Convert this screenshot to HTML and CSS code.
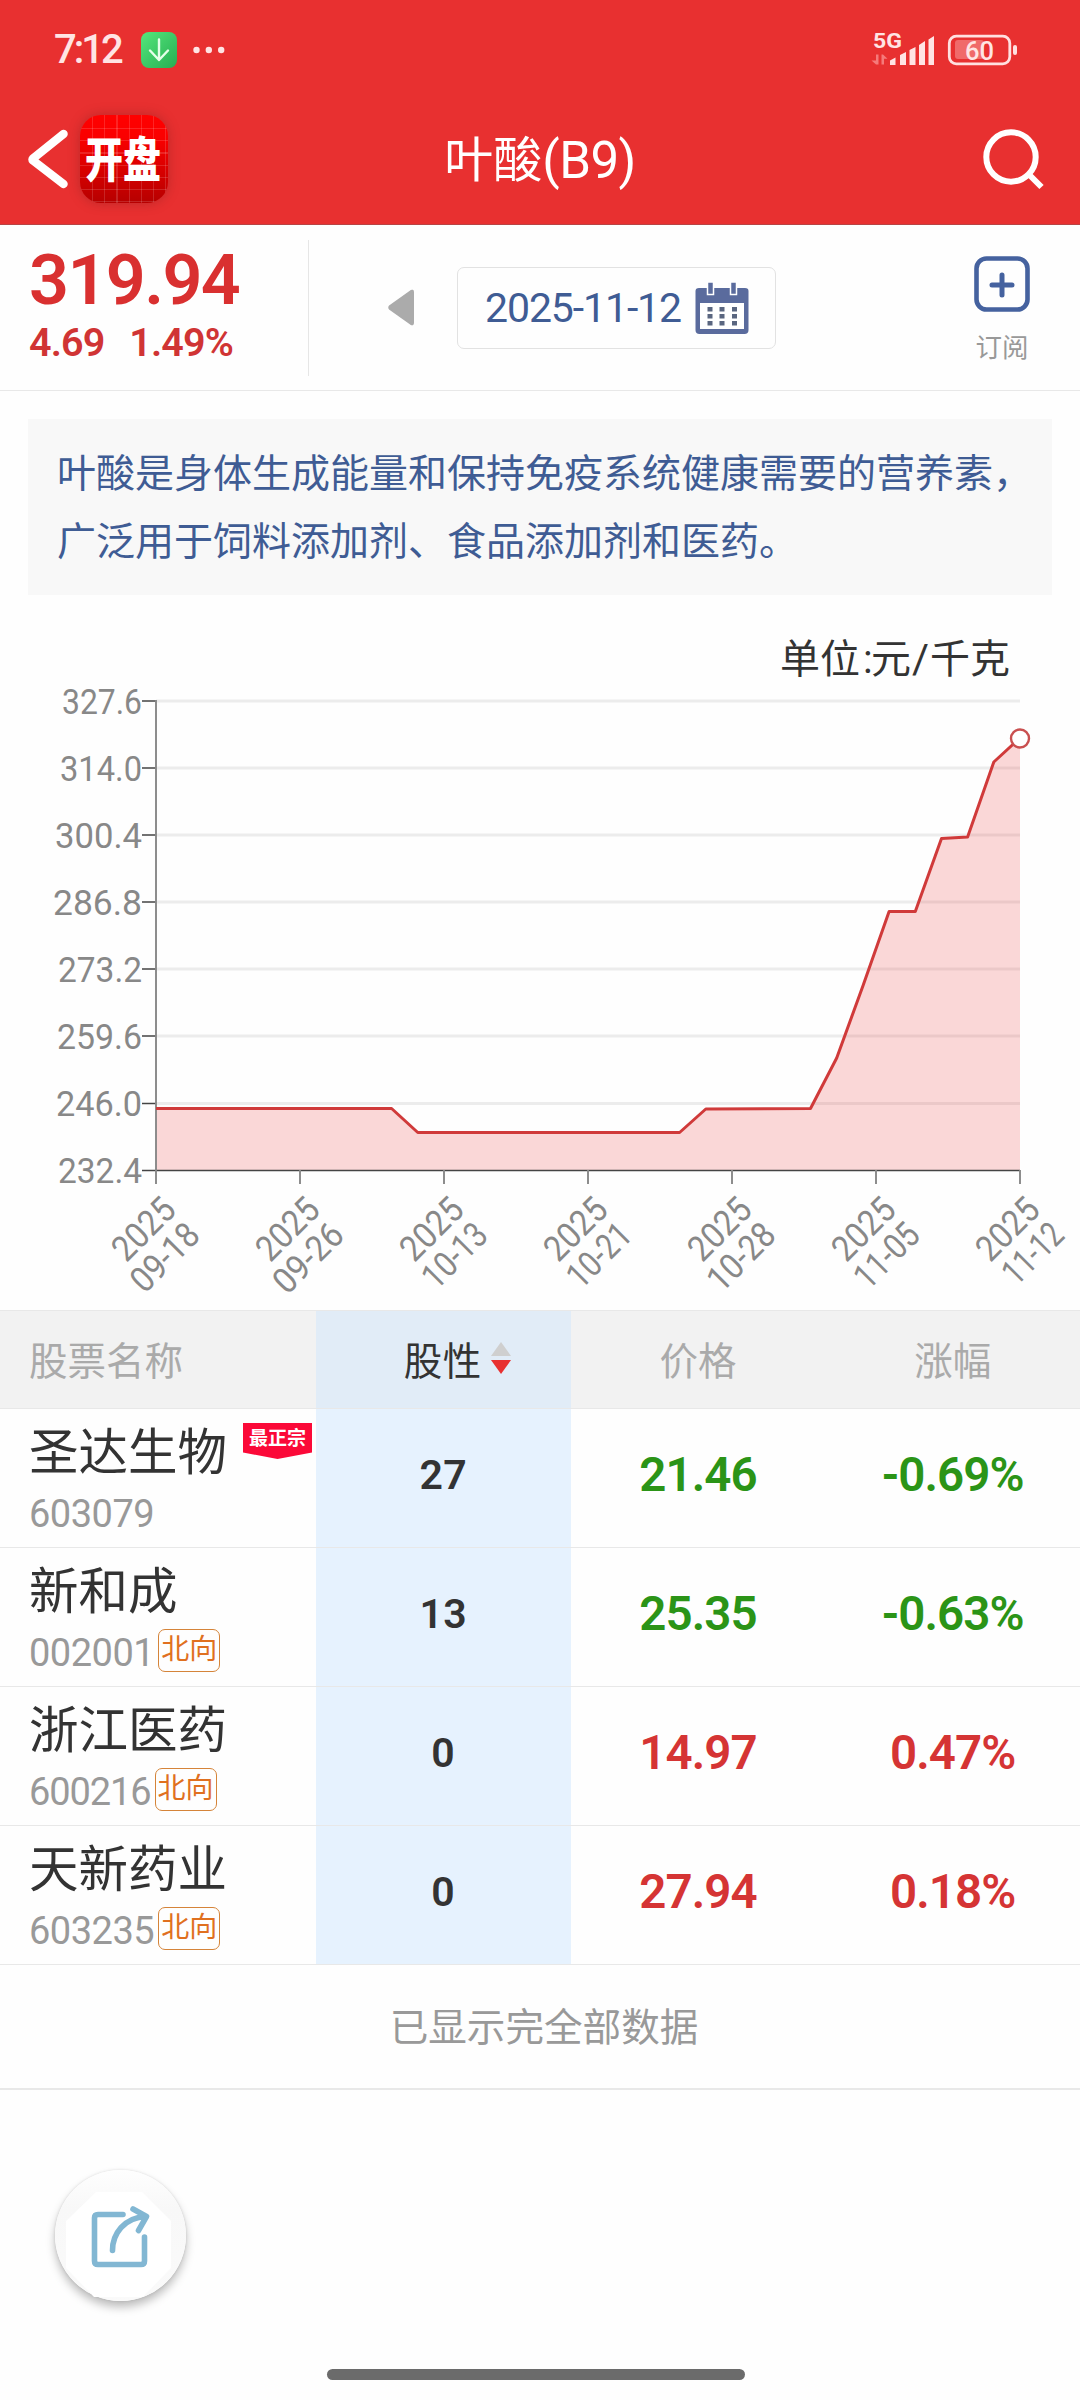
FILE: index.html
```html
<!DOCTYPE html>
<html lang="zh-CN">
<head>
<meta charset="utf-8">
<title>叶酸(B9)</title>
<link rel="stylesheet" href="styles.css">
</head>
<body>
<div class="screen">
  <header class="top">
    <div class="status">
      <span class="time">7:12</span>
      <svg class="dl" width="36" height="36" viewBox="0 0 36 36"><defs><linearGradient id="g" x1="0" y1="0" x2="1" y2="1"><stop offset="0" stop-color="#54e67c"/><stop offset="1" stop-color="#27ae52"/></linearGradient></defs><rect width="36" height="36" rx="8" fill="url(#g)"/><path d="M18 7.500V28M9 18.500L18 28L27 18.500" fill="none" stroke="#e4ffe9" stroke-width="2.400" stroke-linecap="round" stroke-linejoin="round"/></svg>
      <svg class="more" width="32" height="8" viewBox="0 0 32 8" fill="#ffe4e4"><circle cx="3.500" cy="4" r="3.200"/><circle cx="15.800" cy="4" r="3.200"/><circle cx="28.200" cy="4" r="3.200"/></svg>
      <svg class="net" width="150" height="40" viewBox="870 30 150 40">
        <text x="874" y="48" class="g5" textLength="29" lengthAdjust="spacingAndGlyphs">5G</text>
        <path d="M879.500 54.500V64.500H877L872.500 60.500H877V54.500ZM882.500 64.500V54.500H884L888.500 58.800H885V64.500Z" fill="#f57a7a"/>
        <path d="M891 65V60.500L896.500 57.500V65ZM901 65V55L907 52V65ZM910.500 65V50L916.500 47V65ZM920 65V45L926 41V65ZM929.500 65V39.500L935 36V65Z" fill="#ffe4e4"/>
        <rect x="956" y="40" width="29" height="19" rx="3" fill="#f06a6a"/>
        <rect x="950.300" y="36.200" width="60.500" height="27.600" rx="7" fill="none" stroke="#ffe0e0" stroke-width="2.800"/>
        <rect x="1014" y="45" width="4" height="10" rx="2" fill="#ffe0e0"/>
        <text x="966" y="59.500" class="bat" textLength="29" lengthAdjust="spacingAndGlyphs">60</text>
      </svg>
    </div>
    <nav class="nav">
      <div class="nav-left">
        <svg width="42" height="64" viewBox="0 0 42 64"><path d="M36.500 7L6 31.500Q5 32.500 6 33.500L36.500 57" fill="none" stroke="#fff" stroke-width="8.500" stroke-linecap="round" stroke-linejoin="round"/></svg>
        <span class="logo"><b>开盘</b></span>
      </div>
      <h1><span>叶酸</span><span class="b9">(B9)</span></h1>
      <svg class="search" width="62" height="64" viewBox="0 0 62 64" fill="none" stroke="#fff" stroke-width="6"><circle cx="29" cy="30" r="24.700"/><path d="M47 47.500L59.500 60"/></svg>
    </nav>
  </header>

  <section class="summary">
    <div class="quote">
      <div class="big">319.94</div>
      <div class="sub"><span>4.69</span><span>1.49%</span></div>
    </div>
    <svg class="prev" width="29" height="39" viewBox="0 0 29 39"><path d="M3 18L24 3Q26 2 26 4V35Q26 37 24 36L3 21Q1.500 19.500 3 18Z" fill="#ababab" stroke="#ababab" stroke-width="2"/></svg>
    <div class="date"><span>2025-11-12</span>
      <svg width="54" height="52" viewBox="0 0 54 52"><path d="M4 6H50Q53.500 6 53.500 9V48Q53.500 52 49.500 52H4.500Q.500 52 .500 48V9Q.500 6 4 6Z" fill="#5a6b9d"/><path d="M5 21H49V47H5Z" fill="#fff"/><path d="M12.500 0H18.500V12.500H12.500ZM35.500 0H41.500V12.500H35.500Z" fill="#5a6b9d" stroke="#fff" stroke-width="1.500"/><path d="M12.500 25H17.500V29.500H12.500ZM24.500 25H29.500V29.500H24.500ZM37 25H42V29.500H37ZM12.500 32H17.500V36.500H12.500ZM24.500 32H29.500V36.500H24.500ZM37 32H42V36.500H37ZM12.500 39H17.500V43.500H12.500ZM24.500 39H29.500V43.500H24.500ZM37 39H42V43.500H37Z" fill="#5a6680"/></svg>
    </div>
    <div class="follow">
      <svg width="56" height="56" viewBox="0 0 56 56" fill="none" stroke="#45629f" stroke-linecap="round"><rect x="2.500" y="2.500" width="51" height="51" rx="10" stroke-width="4.600"/><path d="M18 29H38M28 19V39" stroke-width="5"/></svg>
      <span>订阅</span>
    </div>
  </section>

  <p class="intro">叶酸是身体生成能量和保持免疫系统健康需要的营养素，<br>广泛用于饲料添加剂、食品添加剂和医药。</p>

  <svg class="chart" width="1080" height="715" viewBox="0 595 1080 715">
    <g class="unit"><text x="780" y="673" textLength="80" lengthAdjust="spacingAndGlyphs">单位</text><text x="863" y="673">:</text><text x="871" y="673">元</text><text x="912" y="673" textLength="17" lengthAdjust="spacingAndGlyphs">/</text><text x="930" y="673" textLength="80" lengthAdjust="spacingAndGlyphs">千克</text></g>
    <path d="M156 701H1020M156 768H1020M156 835H1020M156 902H1020M156 969H1020M156 1036H1020M156 1103.500H1020" stroke="#ececec" stroke-width="3"/>
    <path d="M156 1108.500H391.600L417.800 1132.500H679.600L705.800 1109L810.500 1108.500L836.700 1058L862.900 986L889.100 911.500H915.300L941.500 838.500L967.600 837L993.800 762L1020 738V1170.500H156Z" fill="#e83030" fill-opacity=".19"/>
    <path d="M142 701H156M142 768H156M142 835H156M142 902H156M142 969H156M142 1036H156M142 1103.500H156M142 1170.500H1020" stroke="#444" stroke-width="1.300"/>
    <path d="M156 700V1184M300 1170V1184M444 1170V1184M588 1170V1184M732 1170V1184M876 1170V1184M1020 1170V1184" stroke="#888" stroke-width="1.900"/>
    <path d="M156 1108.500H391.600L417.800 1132.500H679.600L705.800 1109L810.500 1108.500L836.700 1058L862.900 986L889.100 911.500H915.300L941.500 838.500L967.600 837L993.800 762L1020 738" fill="none" stroke="#d03a3a" stroke-width="3" stroke-linejoin="round"/>
    <circle cx="1020" cy="738.500" r="9" fill="#fff" stroke="#c95050" stroke-width="2.400"/>
    <g class="lab" text-anchor="end">
      <text x="142" y="714" textLength="80" lengthAdjust="spacingAndGlyphs">327.6</text>
      <text x="142" y="781" textLength="82" lengthAdjust="spacingAndGlyphs">314.0</text>
      <text x="142" y="848" textLength="87" lengthAdjust="spacingAndGlyphs">300.4</text>
      <text x="142" y="915" textLength="89" lengthAdjust="spacingAndGlyphs">286.8</text>
      <text x="142" y="982" textLength="84" lengthAdjust="spacingAndGlyphs">273.2</text>
      <text x="142" y="1049" textLength="85" lengthAdjust="spacingAndGlyphs">259.6</text>
      <text x="142" y="1116" textLength="86" lengthAdjust="spacingAndGlyphs">246.0</text>
      <text x="142" y="1183" textLength="84" lengthAdjust="spacingAndGlyphs">232.4</text>
    </g>
    <g class="lab" text-anchor="end">
      <g transform="translate(156 1170) rotate(-45)"><text x="-14" y="45" textLength="73" lengthAdjust="spacingAndGlyphs">2025</text><text x="-15" y="80" textLength="81" lengthAdjust="spacingAndGlyphs">09-18</text></g>
      <g transform="translate(300 1170) rotate(-45)"><text x="-14" y="45" textLength="73" lengthAdjust="spacingAndGlyphs">2025</text><text x="-15" y="80" textLength="83" lengthAdjust="spacingAndGlyphs">09-26</text></g>
      <g transform="translate(444 1170) rotate(-45)"><text x="-14" y="45" textLength="73" lengthAdjust="spacingAndGlyphs">2025</text><text x="-15" y="80" textLength="76" lengthAdjust="spacingAndGlyphs">10-13</text></g>
      <g transform="translate(588 1170) rotate(-45)"><text x="-14" y="45" textLength="73" lengthAdjust="spacingAndGlyphs">2025</text><text x="-15" y="80" textLength="75" lengthAdjust="spacingAndGlyphs">10-21</text></g>
      <g transform="translate(732 1170) rotate(-45)"><text x="-14" y="45" textLength="73" lengthAdjust="spacingAndGlyphs">2025</text><text x="-15" y="80" textLength="80" lengthAdjust="spacingAndGlyphs">10-28</text></g>
      <g transform="translate(876 1170) rotate(-45)"><text x="-14" y="45" textLength="73" lengthAdjust="spacingAndGlyphs">2025</text><text x="-15" y="80" textLength="76" lengthAdjust="spacingAndGlyphs">11-05</text></g>
      <g transform="translate(1020 1170) rotate(-45)"><text x="-14" y="45" textLength="73" lengthAdjust="spacingAndGlyphs">2025</text><text x="-15" y="80" textLength="70" lengthAdjust="spacingAndGlyphs">11-12</text></g>
    </g>
  </svg>

  <section class="table">
    <div class="row head">
      <span class="h-name">股票名称</span>
      <span class="hot">股性<svg width="22" height="32" viewBox="0 0 22 32"><path d="M11 0L21 14H1Z" fill="#cfcfcf"/><path d="M1 18H21L11 32Z" fill="#e83030"/></svg></span>
      <span>价格</span><span>涨幅</span>
    </div>
    <div class="row down">
      <div class="stock"><div class="name">圣达生物</div><div class="code">603079</div><span class="badge">最正宗</span></div>
      <span class="hot">27</span><span class="num">21.46</span><span class="num">-0.69%</span>
    </div>
    <div class="row down">
      <div class="stock"><div class="name">新和成</div><div class="code">002001<i>北向</i></div></div>
      <span class="hot">13</span><span class="num">25.35</span><span class="num">-0.63%</span>
    </div>
    <div class="row up">
      <div class="stock"><div class="name">浙江医药</div><div class="code narrow">600216<i>北向</i></div></div>
      <span class="hot">0</span><span class="num">14.97</span><span class="num">0.47%</span>
    </div>
    <div class="row up">
      <div class="stock"><div class="name">天新药业</div><div class="code">603235<i>北向</i></div></div>
      <span class="hot">0</span><span class="num">27.94</span><span class="num">0.18%</span>
    </div>
  </section>
  <div class="end">已显示完全部数据</div>

  <button class="fab" aria-label="分享">
    <svg width="131" height="131" viewBox="0 0 131 131" fill="none" stroke="#82b7d3" stroke-width="5.600" stroke-linecap="round" stroke-linejoin="round"><path d="M41 22H87L116 51V98L88 127H39L11 98V51Z" fill="#fff" stroke="none"/><path d="M68 44.500H43Q39.500 44.500 39.500 48V91Q39.500 94.500 43 94.500H86Q89.500 94.500 89.500 91V67M57.500 80.500C57.500 64 69 47.500 91 46.500M78 39L91.500 46.500L83.500 60.500"/></svg>
  </button>
  <div class="home"></div>
</div>
</body>
</html>
```
FILE: styles.css
```css
* { box-sizing: border-box; }
body { margin: 0; background: #fff; font-family: Roboto, "Noto Sans CJK SC", sans-serif; }
svg { display: block; flex: none; }
.screen { position: relative; width: 1080px; height: 2400px; overflow: hidden; background: #fefefe; display: flex; flex-direction: column; }

.top { height: 225px; background: #e83030; border-bottom: 1px solid #b84444; flex: none; }
.status { height: 100px; display: flex; align-items: center; padding: 0 61px 0 54px; }
.time { width: 87px; font-size: 40px; line-height: 44px; color: #ffe4e4; font-weight: 500; letter-spacing: -3px; white-space: nowrap; }
.more { margin-left: 16px; }
.net { margin-left: auto; }
.g5 { font: 700 21px Roboto, sans-serif; fill: #ffe4e4; }
.bat { font: 500 26px Roboto, sans-serif; fill: #ffe4e4; }
.nav { height: 118px; display: grid; grid-template-columns: 300px 1fr 300px; align-items: center; padding: 0 36px 0 27px; }
.nav-left { display: flex; align-items: center; gap: 11px; }
.logo { width: 88px; height: 88px; border-radius: 21px; display: flex; align-items: center; justify-content: center; color: #fff; box-shadow: 0 0 12px rgba(120,30,30,.4);
  background: repeating-linear-gradient(90deg, transparent 0 11px, rgba(255,255,255,.14) 11px 12.200px) 1px 0, repeating-linear-gradient(transparent 0 11px, rgba(255,255,255,.14) 11px 12.200px) 0 2px, linear-gradient(#ff0000, #fa0000 25%, #b60000); }
.logo b { font: 900 38px/44px "Noto Sans CJK SC", sans-serif; transform: scaleY(1.25); margin: -4px 2px 0 0; }
.nav h1 { margin: 0; padding: 4px 0 0 9px; display: flex; justify-content: center; align-items: center; font-weight: 400; font-size: 49px; line-height: 60px; color: #fff; white-space: nowrap; }
.b9 { font-size: 51px; letter-spacing: -.5px; }
.search { justify-self: end; }

.summary { height: 166px; border-bottom: 1px solid #e8e8e8; display: flex; align-items: center; flex: none; padding-right: 50px; }
.quote { width: 309px; height: 136px; border-right: 1px solid #e6e6e6; padding: 5px 0 0 29px; color: #d93030; }
.big { font-size: 70px; font-weight: 600; line-height: 70px; letter-spacing: -1.600px; height: 70px; }
.sub { display: flex; gap: 25px; font-size: 39.500px; font-weight: 600; line-height: 56px; letter-spacing: -.900px; color: #d03434; }
.prev { margin-left: 78px; }
.date { margin-left: 41px; width: 319px; height: 82px; border: 1.500px solid #e2e2e2; border-radius: 7px; display: flex; align-items: center; justify-content: space-between; padding: 0 26px 0 27px; font-size: 41px; color: #3f5c94; letter-spacing: -1.100px; white-space: nowrap; margin-top: 1px; }
.follow { margin-left: auto; display: flex; flex-direction: column; align-items: center; gap: 19px; font-size: 26.500px; line-height: 34px; color: #999; margin-top: 6px; }

.intro { margin: 28px 28px 0; height: 176px; background: #f8f8f8; padding: 21px 0 0 29px; font-size: 39px; line-height: 68px; color: #3f5c94; white-space: nowrap; flex: none; }
.chart { font-family: Roboto, "Noto Sans CJK SC", sans-serif; }
.unit { font-size: 40px; fill: #333; }
.lab { font-size: 35.500px; fill: #888; }

.row { display: grid; grid-template-columns: 316px repeat(3, 254.667px); height: 139px; border-bottom: 1px solid #e8e8e8; }
.row > span { display: flex; align-items: center; justify-content: center; }
.row.head { height: 99px; border-top: 1px solid #e8e8e8; background: #f2f2f2; color: #aaa; font-size: 38.500px; }
.row.head > span { padding-bottom: 3px; }
.row.head > .h-name { justify-content: flex-start; padding-left: 29px; }
.row .hot { background: #e6f2fe; color: #333; font-size: 41px; font-weight: 600; letter-spacing: .500px; padding-bottom: 7px; }
.row.head .hot { background: #e1ecf7; font-size: 38.500px; font-weight: 400; gap: 8px; padding-left: 29px; }
.num { font-size: 47.500px; font-weight: 600; letter-spacing: -.900px; padding-bottom: 7px; }
.down { color: #2b9417; }
.up { color: #d53434; }
.stock { position: relative; padding: 11px 0 0 29px; }
.name { font-size: 49.500px; line-height: 66px; height: 68px; color: #333; white-space: nowrap; }
.code { height: 52px; display: flex; align-items: center; gap: 4px; font-size: 38px; line-height: 52px; letter-spacing: -.500px; color: #999; }
.code.narrow { letter-spacing: -1.100px; }
.code i { width: 62px; height: 43px; margin-top: -5px; border: 1.500px solid #d58439; border-radius: 7px; font-style: normal; font-size: 28px; line-height: 40px; text-align: center; color: #e0701f; letter-spacing: 0; }
.badge { position: absolute; left: 243px; top: 14px; width: 69px; height: 36px; background: #fb0938; clip-path: polygon(0 0, 100% 0, 100% 82%, 50% 100%, 0 82%); color: #fff; font-size: 19px; font-weight: 700; line-height: 32px; text-align: center; }
.end { height: 125px; border-bottom: 2px solid #e8e8e8; display: flex; align-items: center; justify-content: center; font-size: 38.600px; color: #999; padding: 0 0 5px 8px; }

.fab { position: absolute; left: 55px; top: 2169.500px; width: 131px; height: 131px; border: 0; padding: 0; border-radius: 50%; background: linear-gradient(#fefefe, #f8f8f8 30%, #fafafa); box-shadow: 0 6px 10px rgba(0,0,0,.26), 0 0 3px rgba(0,0,0,.12); }
.home { margin: auto auto 20px 327px; width: 418px; height: 11px; border-radius: 6px; background: #6b6b6b; }
```
